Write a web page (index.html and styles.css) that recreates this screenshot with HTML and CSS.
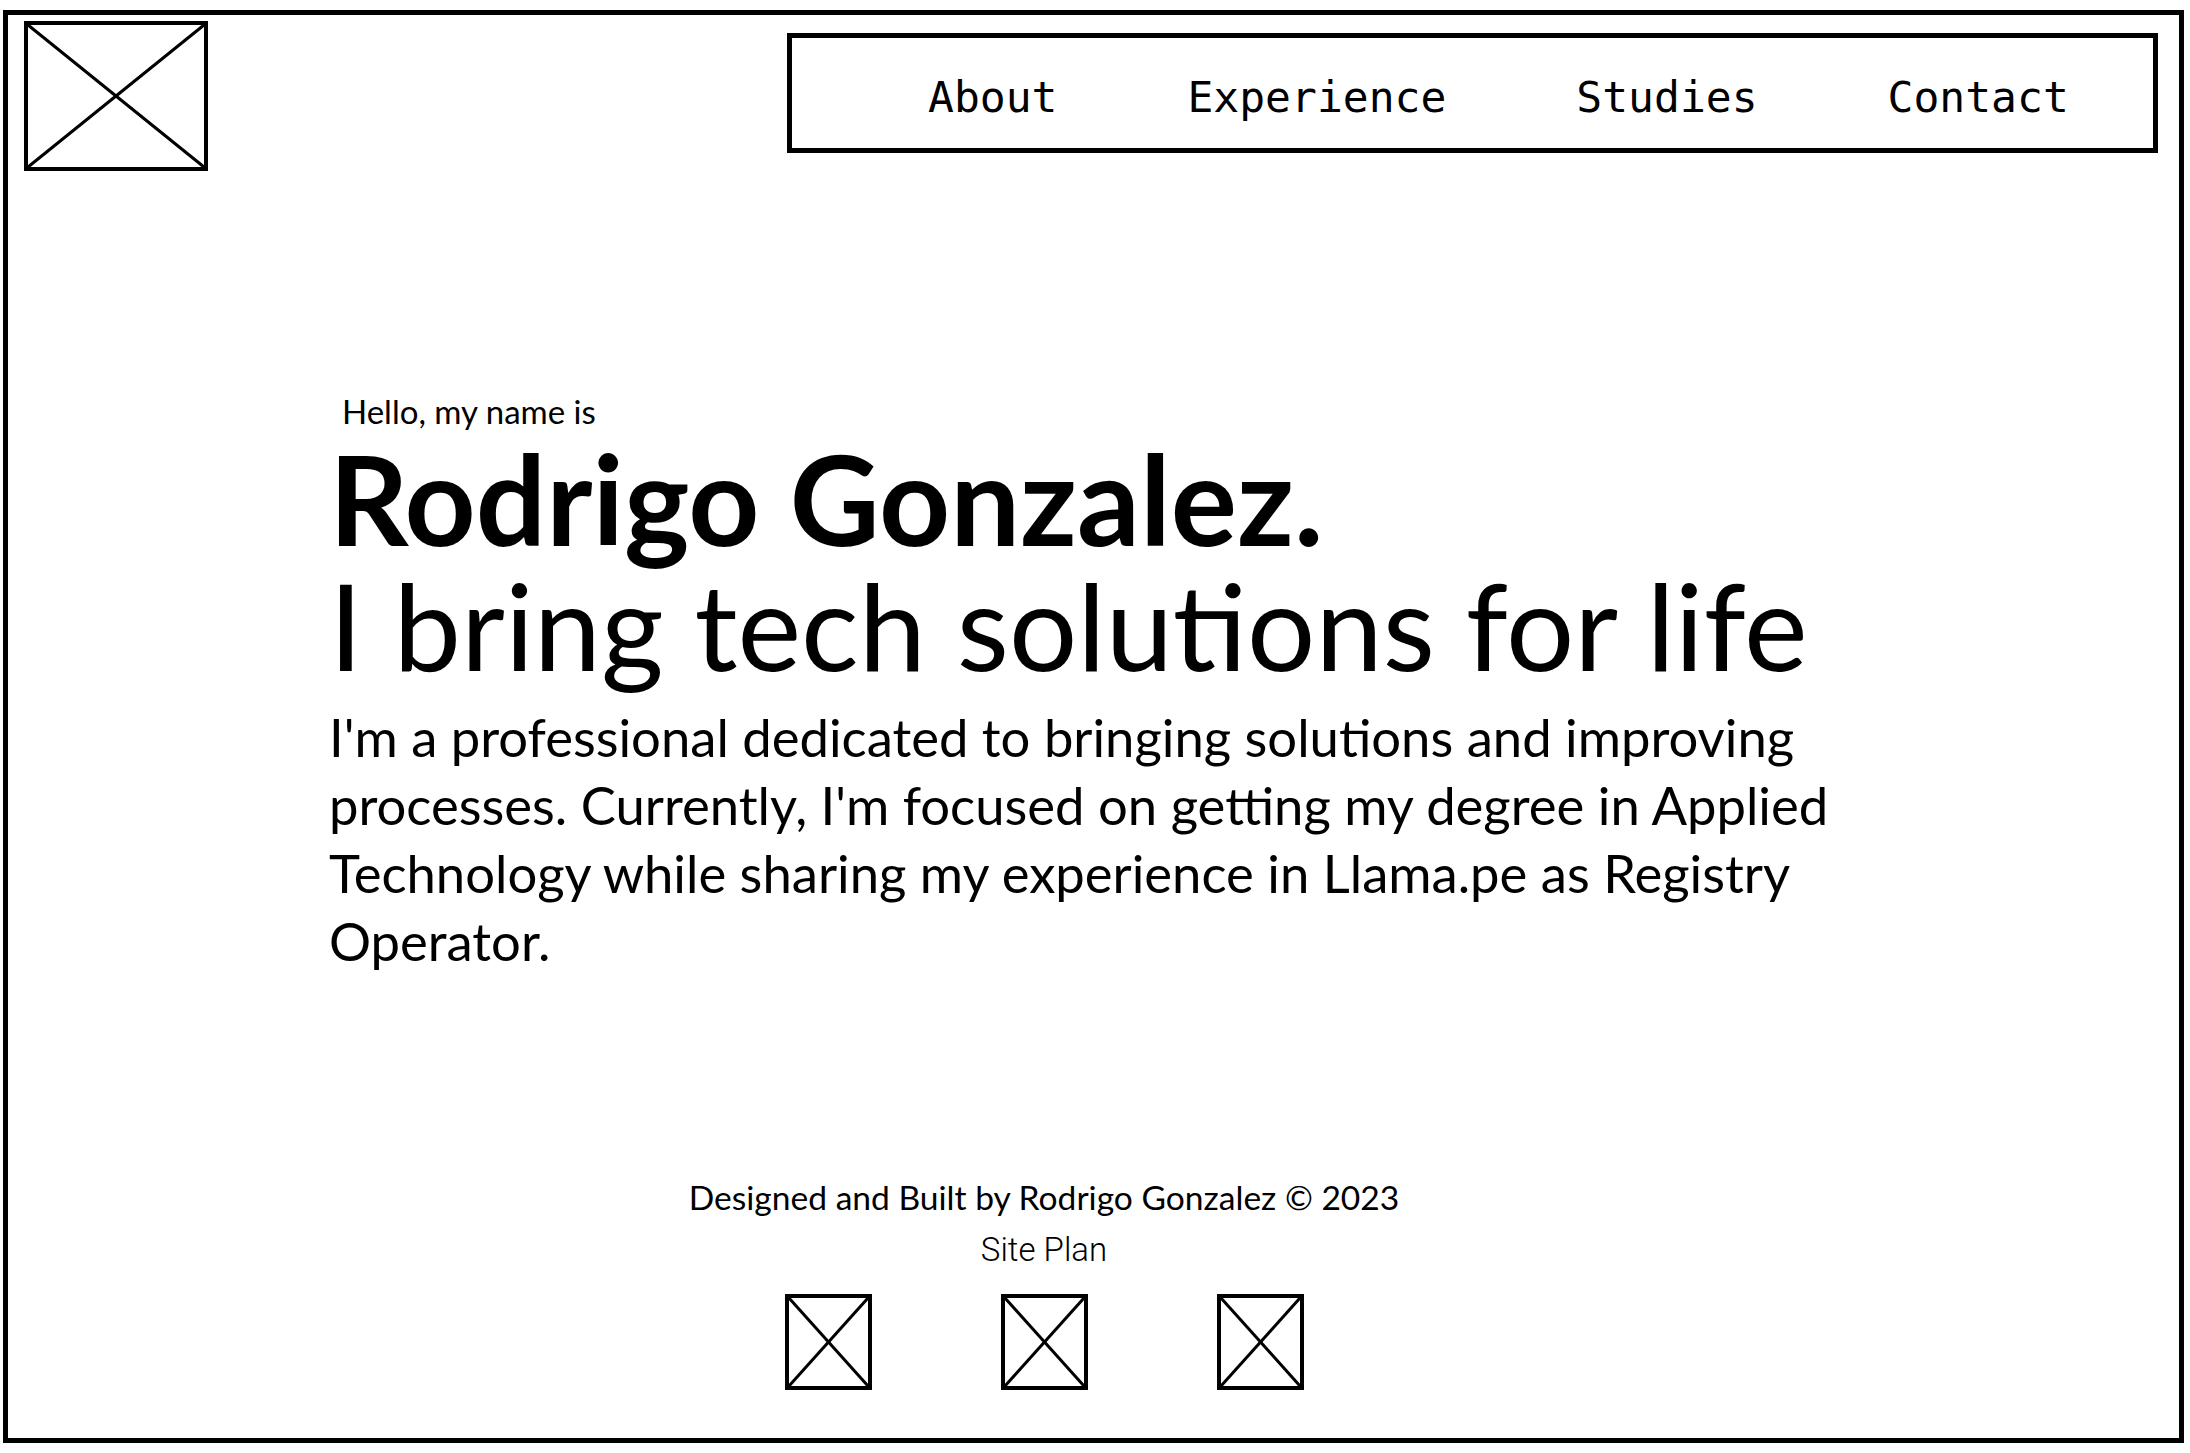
FILE: index.html
```html
<!DOCTYPE html>
<html lang="en">
<head>
<meta charset="utf-8">
<title>Rodrigo Gonzalez</title>
<link rel="stylesheet" href="styles.css">
</head>
<body>
<div class="frame">
  <header class="top">
    <svg class="logo" width="184" height="150" viewBox="0 0 184 150">
      <rect x="2" y="2" width="180" height="146" fill="none" stroke="#000" stroke-width="4"/>
      <line x1="4" y1="4" x2="180" y2="146" stroke="#000" stroke-width="3"/>
      <line x1="180" y1="4" x2="4" y2="146" stroke="#000" stroke-width="3"/>
    </svg>
    <nav class="nav">
      <a href="#about">About</a>
      <a href="#experience">Experience</a>
      <a href="#studies">Studies</a>
      <a href="#contact">Contact</a>
    </nav>
  </header>
  <main class="hero">
    <p class="hello">Hello, my name is</p>
    <h1 class="name">Rodrigo Gonzalez.</h1>
    <h2 class="tagline">I bring tech solutions for life</h2>
    <p class="intro">I'm a professional dedicated to bringing solutions and improving processes. Currently, I'm focused on getting my degree in Applied Technology while sharing my experience in Llama.pe as Registry Operator.</p>
  </main>
  <footer class="foot">
    <p class="credit">Designed and Built by Rodrigo Gonzalez © 2023</p>
    <a class="plan" href="#plan">Site Plan</a>
    <div class="socials">
      <svg class="social" width="87" height="96" viewBox="0 0 87 96"><rect x="2" y="2" width="83" height="92" fill="none" stroke="#000" stroke-width="4"/><line x1="4" y1="4" x2="83" y2="92" stroke="#000" stroke-width="3"/><line x1="83" y1="4" x2="4" y2="92" stroke="#000" stroke-width="3"/></svg>
      <svg class="social" width="87" height="96" viewBox="0 0 87 96"><rect x="2" y="2" width="83" height="92" fill="none" stroke="#000" stroke-width="4"/><line x1="4" y1="4" x2="83" y2="92" stroke="#000" stroke-width="3"/><line x1="83" y1="4" x2="4" y2="92" stroke="#000" stroke-width="3"/></svg>
      <svg class="social" width="87" height="96" viewBox="0 0 87 96"><rect x="2" y="2" width="83" height="92" fill="none" stroke="#000" stroke-width="4"/><line x1="4" y1="4" x2="83" y2="92" stroke="#000" stroke-width="3"/><line x1="83" y1="4" x2="4" y2="92" stroke="#000" stroke-width="3"/></svg>
    </div>
  </footer>
</div>
</body>
</html>
```
FILE: styles.css
```css
* { box-sizing: border-box; }
html, body { margin: 0; padding: 0; background: #fff; }
body { color: #000; font-family: Lato, "Liberation Sans", sans-serif; }

.frame {
  margin: 10px 0 0 3px;
  width: 2181px;
  height: 1433px;
  border: 5px solid #000;
  display: flex;
  flex-direction: column;
}

.top {
  display: flex;
  justify-content: space-between;
  align-items: flex-start;
  padding: 6px 21px 0 16px;
}
.logo { display: block; }

.nav {
  margin-top: 12px;
  width: 1371px;
  height: 120px;
  border: 5px solid #000;
  display: flex;
  align-items: center;
  gap: 130px;
  padding: 8px 0 0 136px;
}
.nav a {
  font-family: "DejaVu Sans Mono", "Liberation Mono", monospace;
  font-size: 43px;
  color: #000;
  text-decoration: none;
}

.hero {
  margin-top: 220px;
  padding-left: 321px;
}
.hello {
  margin: 0 0 0 13px;
  font-size: 33px;
  line-height: 40px;
}
.name {
  margin: 5px 0 0;
  font-size: 124px;
  line-height: 124px;
  font-weight: 700;
}
.tagline {
  margin: 3px 0 0;
  font-size: 120.5px;
  line-height: 124px;
  font-weight: 400;
}
.intro {
  margin: 15.5px 0 0;
  max-width: 1560px;
  font-size: 52.6px;
  line-height: 68px;
}

.foot {
  margin-top: auto;
  padding: 0 99px 48px 0;
  display: flex;
  flex-direction: column;
  align-items: center;
}
.credit {
  margin: 0;
  font-size: 33.6px;
  line-height: 40px;
}
.plan {
  margin-top: 13px;
  font-family: Roboto, sans-serif;
  font-weight: 300;
  font-size: 33px;
  line-height: 40px;
  color: #000;
  text-decoration: none;
}
.socials {
  margin-top: 24px;
  display: flex;
  gap: 129px;
}
.social { display: block; }
```
